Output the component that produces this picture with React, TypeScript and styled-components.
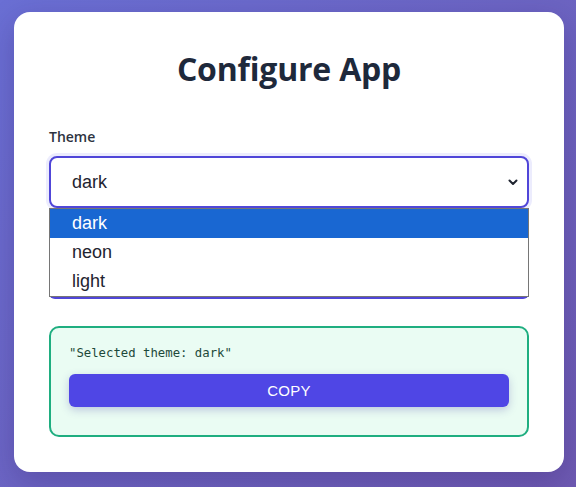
import React from "react";
import styled, { createGlobalStyle } from "styled-components";

const Global = createGlobalStyle`
  html, body { margin: 0; padding: 0; }
  body {
    width: 576px;
    height: 487px;
    overflow: hidden;
    background: linear-gradient(135deg, #6a6fd4 0%, #6e5ab2 100%);
    font-family: "Open Sans", "Noto Sans", sans-serif;
  }
  #root { padding: 12px 12px 0 14px; }
`;

const Card = styled.div`
  width: 550px;
  height: 460px;
  box-sizing: border-box;
  background: #ffffff;
  border-radius: 16px;
  padding: 35px;
  box-shadow: 0 10px 30px rgba(40, 20, 90, 0.25);
  display: flex;
  flex-direction: column;
`;

const Title = styled.h1`
  margin: 0 0 37px;
  text-align: center;
  font-family: "Open Sans", "Noto Sans", sans-serif;
  font-size: 32px;
  line-height: 44px;
  font-weight: 700;
  color: #1e293b;
  letter-spacing: -0.2px;
`;

const Label = styled.label`
  display: block;
  font-family: "Open Sans", "Noto Sans", sans-serif;
  font-size: 14px;
  font-weight: 600;
  color: #2d3340;
  line-height: 18px;
  margin-bottom: 10px;
`;

const SelectWrap = styled.div`
  position: relative;
  margin-bottom: 51px;
`;

const SelectBox = styled.div`
  height: 52px;
  box-sizing: border-box;
  border: 2px solid #5046d8;
  border-radius: 8px;
  box-shadow: 0 0 0 3px rgba(99, 102, 241, 0.12);
  display: flex;
  align-items: center;
  justify-content: space-between;
  padding: 0 9px 0 21px;
  font-family: "Liberation Sans", Arial, sans-serif;
  font-size: 18px;
  color: #1f2430;
  background: #fff;
`;

const Popup = styled.ul`
  position: absolute;
  left: 0;
  right: 0;
  top: 100%;
  margin: 0;
  padding: 0;
  list-style: none;
  background: #fff;
  border: 1px solid #767676;
  z-index: 2;
`;

const Option = styled.li<{ $active?: boolean }>`
  height: 29px;
  line-height: 29px;
  padding-left: 22px;
  font-family: "Liberation Sans", Arial, sans-serif;
  font-size: 18px;
  color: ${(p) => (p.$active ? "#ffffff" : "#1f2430")};
  background: ${(p) => (p.$active ? "#1967d2" : "transparent")};
`;

const HiddenButton = styled.div`
  height: 40px;
  border-radius: 6px;
  background: #5046d8;
  margin-bottom: 27px;
`;

const Result = styled.div`
  border: 2px solid #1fae80;
  border-radius: 10px;
  background: #eafcf3;
  padding: 17px 18px 28px;
`;

const Quote = styled.div`
  font-family: "DejaVu Sans Mono", "Liberation Mono", monospace;
  font-size: 12.3px;
  line-height: 16px;
  color: #1d4a3a;
  margin-bottom: 13px;
`;

const CopyButton = styled.button`
  width: 100%;
  height: 33px;
  border: none;
  border-radius: 6px;
  background: #4f46e5;
  color: #fff;
  font-family: "Liberation Sans", Arial, sans-serif;
  font-size: 15px;
  letter-spacing: 0.3px;
  box-shadow: 0 3px 8px rgba(60, 50, 160, 0.25);
  cursor: pointer;
`;

const Chevron = () => (
  <svg width="10" height="7" viewBox="0 0 10 7">
    <path d="M1.5 1.5 L5 5 L8.5 1.5" fill="none" stroke="#1f2430" strokeWidth="2" strokeLinecap="round" strokeLinejoin="round" />
  </svg>
);

export default function App() {
  const options = ["dark", "neon", "light"];
  return (
    <>
      <Global />
      <Card>
        <Title>Configure App</Title>
        <Label>Theme</Label>
        <SelectWrap>
          <SelectBox>
            <span>dark</span>
            <Chevron />
          </SelectBox>
          <Popup>
            {options.map((o, i) => (
              <Option key={o} $active={i === 0}>{o}</Option>
            ))}
          </Popup>
        </SelectWrap>
        <HiddenButton />
        <Result>
          <Quote>"Selected theme: dark"</Quote>
          <CopyButton>COPY</CopyButton>
        </Result>
      </Card>
    </>
  );
}
